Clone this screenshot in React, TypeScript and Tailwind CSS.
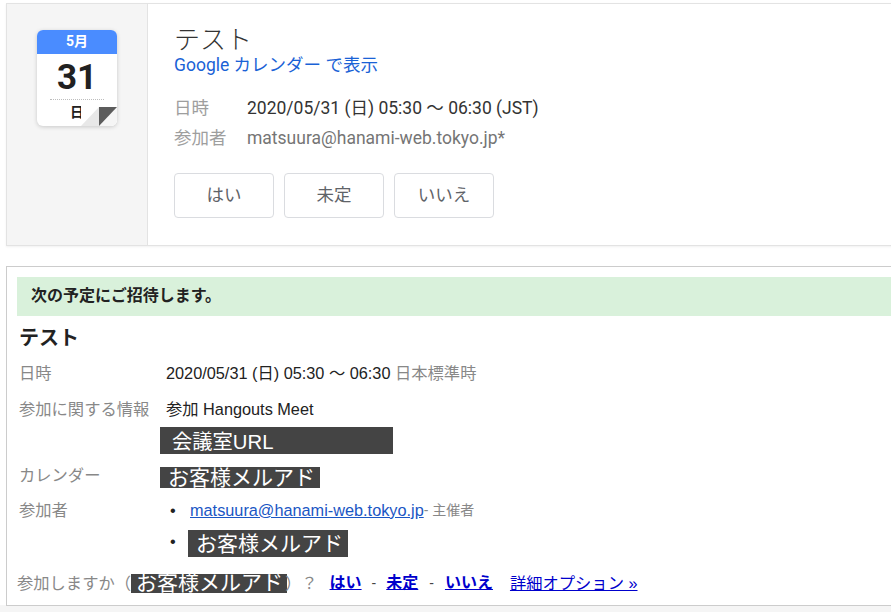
import React from 'react';

const topFont = "font-['Roboto','Noto_Sans_CJK_JP',sans-serif]";
const mailFont = "font-['Liberation_Sans','Noto_Sans_CJK_JP',sans-serif]";

const Redacted = ({ className, children }: { className: string; children: React.ReactNode }) => (
  <span className={`block bg-[#444444] text-white whitespace-nowrap ${className}`}>{children}</span>
);

const CalendarIcon = () => (
  <div className="relative w-[80px] h-[96px] rounded-[6px] bg-white shadow-[0_1px_4px_rgba(0,0,0,0.18)] overflow-hidden">
    <div className="h-[24px] bg-[#4a8cff] text-white text-[14px] font-bold leading-[23px] text-center">5月</div>
    <div className="pt-[3px] text-[#212121] text-[35px] font-bold leading-[42px] text-center">31</div>
    <div className="mx-[13px] border-t border-dotted border-[#bdbdbd]" />
    <div className="text-[#212121] text-[14px] font-bold leading-[24px] text-center">日</div>
    <svg className="absolute right-0 bottom-0" width="36" height="24" viewBox="0 0 36 24">
      <rect x="0" y="0" width="36" height="24" fill="#ffffff" />
      <polygon points="18,5 18,24 0,24" fill="#e8e8e8" />
      <polygon points="18,24 36,5 36,24" fill="#f5f5f5" />
      <polygon points="18,5 36,5 18,24" fill="#5c5c5c" />
    </svg>
  </div>
);

const RsvpButton = ({ label }: { label: string }) => (
  <div className="w-[100px] h-[45px] flex items-center justify-center rounded-[4px] border border-[#dadce0] text-[17.5px] text-[#5f6368]">
    {label}
  </div>
);

const TopCard = () => (
  <div className={`flex h-[243px] w-[1000px] border border-[#e3e3e3] bg-white shadow-[0_1px_2px_rgba(0,0,0,0.06)] ${topFont}`}>
    <div className="w-[141px] shrink-0 bg-[#f5f5f5] border-r border-[#e3e3e3] pt-[26px] pl-[30px]">
      <CalendarIcon />
    </div>
    <div className="pl-[26px] pt-[21px]">
      <div className="text-[26px] leading-[30px] text-[#333333] font-light">テスト</div>
      <div className="text-[17.5px] leading-[20px] text-[#1a62d6]">Google カレンダー で表示</div>
      <div className="flex mt-[18px] text-[17.5px] leading-[30px]">
        <div className="w-[73px] text-[#9e9e9e]">日時</div>
        <div className="text-[#333333]">2020/05/31 (日) 05:30 ～ 06:30 (JST)</div>
      </div>
      <div className="flex text-[17.5px] leading-[30px]">
        <div className="w-[73px] text-[#9e9e9e]">参加者</div>
        <div className="text-[#757575]">matsuura@hanami-web.tokyo.jp*</div>
      </div>
      <div className="flex gap-[10px] mt-[20px]">
        <RsvpButton label="はい" />
        <RsvpButton label="未定" />
        <RsvpButton label="いいえ" />
      </div>
    </div>
  </div>
);

const LinkBlue = 'text-[#0000cc] underline';

const MailCard = () => (
  <div className={`w-[1000px] h-[340px] mt-[20px] border border-[#cccccc] bg-white pl-[10px] pt-[10px] text-[16.3px] text-[#222222] ${mailFont}`}>
    <div className="h-[39px] bg-[#d9f1db] pl-[14px] text-[16px] font-bold leading-[38px]">次の予定にご招待します。</div>
    <div className="pl-[2px] mt-[9px] text-[20px] font-bold leading-[27px]">テスト</div>
    <div className="flex pl-[2px] mt-[11px] leading-[20px]">
      <div className="w-[147px] text-[#888888]">日時</div>
      <div>
        2020/05/31 (日) 05:30 ～ 06:30 <span className="text-[#888888]">日本標準時</span>
      </div>
    </div>
    <div className="flex pl-[2px] mt-[16px] leading-[20px]">
      <div className="w-[147px] text-[#888888]">参加に関する情報</div>
      <div>参加 Hangouts Meet</div>
    </div>
    <div className="ml-[143px] mt-[8px]">
      <Redacted className="w-[233px] h-[27px] pl-[12px] leading-[30px] text-[20.3px]">会議室URL</Redacted>
    </div>
    <div className="flex pl-[2px] mt-[13px]">
      <div className="w-[141px] text-[#888888] leading-[16px]">カレンダー</div>
      <Redacted className="w-[160px] h-[21px] pl-[8px] leading-[21px] text-[21px]">お客様メルアド</Redacted>
    </div>
    <div className="flex pl-[2px] mt-[12px]">
      <div className="w-[147px] text-[#888888] leading-[20px]">参加者</div>
      <ul className="leading-[20px]">
        <li className="flex items-center">
          <span className="w-[24px] text-[#222222] pl-[4px]">•</span>
          <span className="text-[#1a56c4] underline">matsuura@hanami-web.tokyo.jp</span>
          <span className="text-[#888888] text-[14px]">- 主催者</span>
        </li>
        <li className="flex mt-[10px]">
          <span className="w-[22px] text-[#222222] pl-[4px] pt-px">•</span>
          <Redacted className="w-[160px] h-[27px] pl-[8px] leading-[27px] text-[21px]">お客様メルアド</Redacted>
        </li>
      </ul>
    </div>
    <div className="flex items-center mt-[16px] leading-[20px] text-[#888888]">
      <span className="whitespace-nowrap">参加しますか（</span>
      <Redacted className="w-[156px] h-[19px] pl-[5px] leading-[18px] text-[21px]">お客様メルアド</Redacted>
      <span className="whitespace-nowrap -ml-[2px]">）？</span>
      <a className={`ml-[12px] font-bold text-[16px] ${LinkBlue}`}>はい</a>
      <span className="mx-[10px] text-[#444444] text-[14px]">-</span>
      <a className={`font-bold text-[16px] ${LinkBlue}`}>未定</a>
      <span className="mx-[11px] text-[#444444] text-[14px]">-</span>
      <a className={`font-bold text-[16px] ${LinkBlue}`}>いいえ</a>
      <a className={`ml-[17px] font-normal ${LinkBlue}`}>詳細オプション »</a>
    </div>
  </div>
);

export default function App() {
  return (
    <div className="w-[891px] h-[612px] overflow-hidden bg-[#f5f5f5]">
      <div className="h-[605px] bg-white pl-[6px] pt-[3px]">
        <TopCard />
        <MailCard />
      </div>
    </div>
  );
}
